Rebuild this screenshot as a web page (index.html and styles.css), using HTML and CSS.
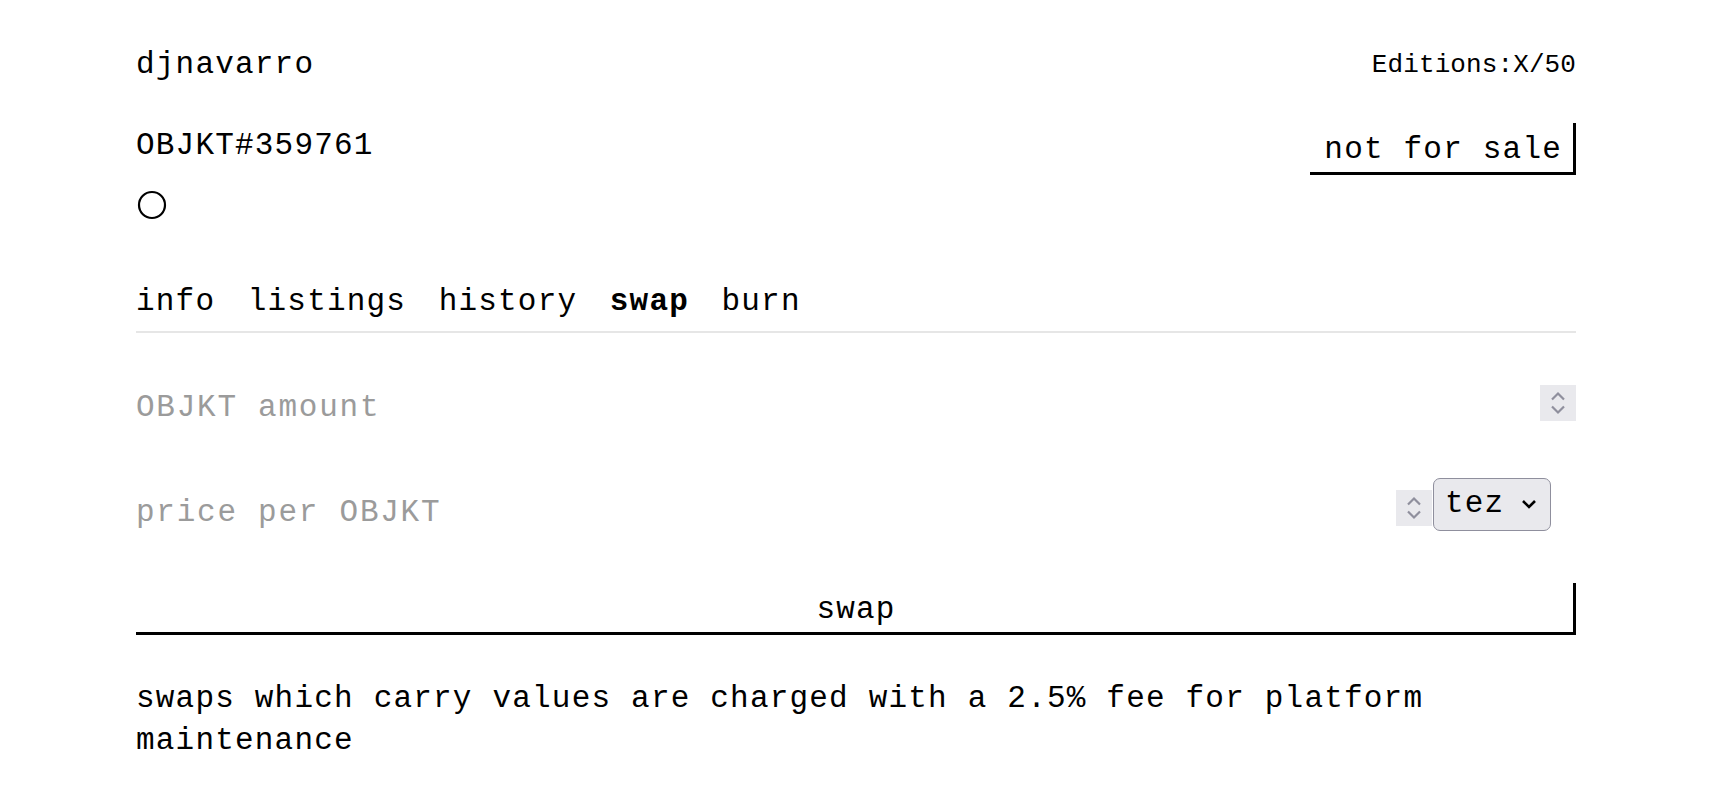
FILE: index.html
```html
<!DOCTYPE html>
<html lang="en">
<head>
<meta charset="utf-8">
<title>OBJKT#359761</title>
<link rel="stylesheet" href="styles.css">
</head>
<body>
<main class="page">
  <header class="head-row">
    <span class="creator">djnavarro</span>
    <span class="editions">Editions:X/50</span>
  </header>

  <section class="title-row">
    <div class="title-col">
      <h1 class="objkt-title">OBJKT#359761</h1>
      <svg class="circle-icon" width="30" height="30" viewBox="0 0 30 30" aria-hidden="true">
        <circle cx="15" cy="15" r="13" fill="none" stroke="#000" stroke-width="2.2"/>
      </svg>
    </div>
    <button class="btn btn-sale" type="button">not for sale</button>
  </section>

  <nav class="tabs">
    <span class="tab">info</span>
    <span class="tab">listings</span>
    <span class="tab">history</span>
    <span class="tab tab-active">swap</span>
    <span class="tab">burn</span>
  </nav>

  <form class="swap-form">
    <div class="field field-amount">
      <input class="field-input" type="text" placeholder="OBJKT amount">
      <span class="spinner" aria-hidden="true">
        <svg width="16" height="26" viewBox="0 0 16 26">
          <polyline points="2,9.5 8,3.5 14,9.5" fill="none" stroke="#8f8f9d" stroke-width="2.2"/>
          <polyline points="2,16.5 8,22.5 14,16.5" fill="none" stroke="#8f8f9d" stroke-width="2.2"/>
        </svg>
      </span>
    </div>

    <div class="field field-price">
      <input class="field-input" type="text" placeholder="price per OBJKT">
      <span class="spinner" aria-hidden="true">
        <svg width="16" height="26" viewBox="0 0 16 26">
          <polyline points="2,9.5 8,3.5 14,9.5" fill="none" stroke="#8f8f9d" stroke-width="2.2"/>
          <polyline points="2,16.5 8,22.5 14,16.5" fill="none" stroke="#8f8f9d" stroke-width="2.2"/>
        </svg>
      </span>
      <div class="currency">
        <span class="currency-text">tez</span>
        <svg width="16" height="10" viewBox="0 0 16 10" aria-hidden="true">
          <polyline points="2,2 8,8 14,2" fill="none" stroke="#000" stroke-width="2.6"/>
        </svg>
      </div>
    </div>

    <button class="btn btn-swap" type="button">swap</button>
  </form>

  <p class="note">swaps which carry values are charged with a 2.5% fee for platform maintenance</p>
</main>
</body>
</html>
```

FILE: styles.css
```css
html, body {
  margin: 0;
  padding: 0;
  background: #ffffff;
}

body {
  font-family: "Liberation Mono", "DejaVu Sans Mono", monospace;
  color: #000000;
}

.page {
  width: 1440px;
  margin: 0 auto;
  padding-top: 45px;
}

.head-row {
  display: flex;
  justify-content: space-between;
  align-items: center;
  height: 40px;
  margin-bottom: 38px;
}

.creator {
  font-size: 31px;
  letter-spacing: 1.2px;
  line-height: 40px;
}

.editions {
  font-size: 26px;
  letter-spacing: 0.1px;
  line-height: 40px;
}

.title-row {
  display: flex;
  justify-content: space-between;
  align-items: flex-start;
}

.title-col {
  display: flex;
  flex-direction: column;
  align-items: flex-start;
}

.objkt-title {
  margin: 0;
  font-size: 31px;
  font-weight: normal;
  letter-spacing: 1.2px;
  line-height: 46px;
}

.circle-icon {
  display: block;
  margin-top: 21px;
  margin-left: 1px;
}

.btn {
  font-family: inherit;
  font-size: 31px;
  letter-spacing: 1.2px;
  line-height: 35px;
  color: #000;
  background: #fff;
  border: 0;
  border-right: 3px solid #000;
  border-bottom: 3px solid #000;
  border-radius: 0;
  padding: 9px 11px 5px 14px;
  margin: 0;
  cursor: pointer;
}

.tabs {
  display: flex;
  gap: 32.5px;
  margin-top: 62px;
  padding-bottom: 9px;
  border-bottom: 2px solid #e6e6e6;
}

.tab {
  font-size: 31px;
  letter-spacing: 1.2px;
  line-height: 40px;
}

.tab-active {
  font-weight: bold;
}

.swap-form {
  display: flex;
  flex-direction: column;
  margin-top: 50px;
}

.field {
  display: flex;
  align-items: flex-start;
}

.field-input {
  flex: 1;
  min-width: 0;
  height: 44px;
  box-sizing: border-box;
  padding: 4px 0 0 0;
  border: 0;
  outline: none;
  background: transparent;
  font-family: inherit;
  font-size: 31px;
  letter-spacing: 1.75px;
  color: #000;
}

.field-input::placeholder {
  color: #9b9b9b;
  opacity: 1;
}

.spinner {
  display: flex;
  align-items: center;
  justify-content: center;
  width: 36px;
  height: 36px;
  background: #e9e9ed;
  margin-top: 2px;
}

.field-price {
  margin-top: 51px;
}

.field-price .field-input {
  margin-top: 10px;
}

.field-price .spinner {
  margin-top: 12px;
  margin-right: 1px;
}

.currency {
  display: flex;
  align-items: center;
  justify-content: space-between;
  box-sizing: border-box;
  width: 118px;
  height: 53px;
  padding: 0 13px 2px 11px;
  margin-right: 25px;
  background: #e9e9ed;
  border: 1px solid #8f8f9d;
  border-radius: 7px;
}

.currency-text {
  font-size: 31px;
  letter-spacing: 1.2px;
  line-height: 35px;
}

.btn-swap {
  width: 100%;
  margin-top: 51px;
  text-align: center;
}

.note {
  margin: 43px 0 0;
  font-size: 31px;
  letter-spacing: 1.2px;
  line-height: 41.5px;
}
```
